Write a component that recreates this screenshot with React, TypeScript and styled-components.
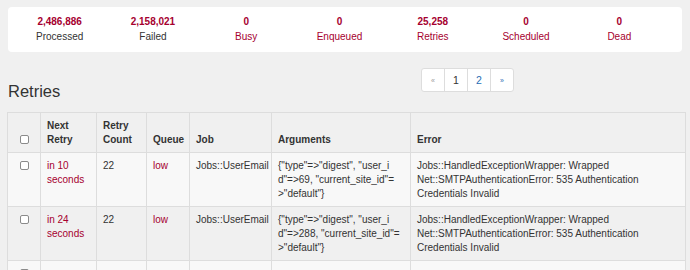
import { FC } from "react";
import styled, { createGlobalStyle } from "styled-components";

const GlobalStyle = createGlobalStyle`
    html, body {
        margin: 0;
        padding: 0;
        background-color: #f0f0f0;
        font-family: "Liberation Sans", Arial, sans-serif;
        color: #333;
    }
`;

const RED = "#a6002f";

// page
const Page = styled.div`
    padding: 7px 4px 0 7px;
    width: 690px;
    height: 270px;
    box-sizing: border-box;
    overflow: hidden;
`;

// stats bar
const StatsBar = styled.ul`
    list-style: none;
    margin: 0 4px 0 1px;
    padding: 8px 16px 6px 5px;
    height: 45px;
    box-sizing: border-box;
    display: grid;
    grid-template-columns: repeat(7, 1fr);
    background-color: #fff;
    border-radius: 4px;
`;

const Stat = styled.li`
    display: flex;
    flex-direction: column;
    align-items: center;
    gap: 1px;
`;

const StatCount = styled.span`
    font-size: 10px;
    line-height: 14px;
    font-weight: bold;
    color: ${RED};
`;

const StatLabel = styled.span<{ link: boolean }>`
    font-size: 10px;
    line-height: 14px;
    color: ${(props) => (props.link ? RED : "#333")};
`;

// heading + pager
const HeaderRow = styled.div`
    display: grid;
    grid-template-columns: 414px auto;
    align-items: start;
    margin-top: 16px;
`;

const Title = styled.h3`
    margin: 14px 0 0 1px;
    font-size: 16.5px;
    line-height: 18px;
    font-weight: normal;
    color: #333;
`;

const Pager = styled.ul`
    list-style: none;
    margin: 0;
    padding: 0;
    display: flex;
    width: max-content;
    background-color: #fff;
    border: 1px solid #ddd;
    border-radius: 3px;
`;

const PageItem = styled.li<{ tone: "muted" | "current" | "link"; small?: boolean }>`
    width: 22px;
    height: 22px;
    display: flex;
    align-items: center;
    justify-content: center;
    font-size: ${(props) => (props.small ? "7px" : "10.5px")};
    color: ${({ tone }) => (tone === "muted" ? "#999" : tone === "current" ? "#333" : "#2a6fb5")};
    & + & {
        border-left: 1px solid #ddd;
    }
`;

// table
const Table = styled.table`
    margin-top: 12px;
    width: 679px;
    table-layout: fixed;
    border-collapse: collapse;
    font-size: 10px;
    line-height: 14px;
`;

const Row = styled.tr<{ light?: boolean }>`
    background-color: ${(props) => (props.light ? "#f8f8f8" : "transparent")};
`;

const HeadCell = styled.th`
    border: 1px solid #ddd;
    padding: 6px 6px 5px;
    text-align: left;
    vertical-align: bottom;
    font-weight: bold;
    color: #333;
`;

const Cell = styled.td<{ red?: boolean; breakAll?: boolean }>`
    border: 1px solid #ddd;
    padding: 6px 6px 5px;
    vertical-align: top;
    color: ${(props) => (props.red ? RED : "#333")};
    word-break: ${(props) => (props.breakAll ? "break-all" : "normal")};
`;

const CheckCell = styled.td`
    border: 1px solid #ddd;
    padding: 6px 0 5px;
    vertical-align: top;
    text-align: center;
`;

const CheckHead = styled(HeadCell)`
    text-align: center;
    padding-left: 0;
    padding-right: 0;
`;

const Check = styled.input.attrs({ type: "checkbox" })`
    appearance: none;
    display: inline-block;
    width: 9px;
    height: 9px;
    margin: 2px 0 0;
    border: 1px solid #8a8a8a;
    border-radius: 2px;
    background-color: #fff;
    box-sizing: border-box;
    vertical-align: top;
`;

const stats = [
    { count: "2,486,886", label: "Processed", link: false },
    { count: "2,158,021", label: "Failed", link: false },
    { count: "0", label: "Busy", link: true },
    { count: "0", label: "Enqueued", link: true },
    { count: "25,258", label: "Retries", link: true },
    { count: "0", label: "Scheduled", link: true },
    { count: "0", label: "Dead", link: true },
];

const retries = [
    { next: "in 10 seconds", count: 22, queue: "low", job: "Jobs::UserEmail", userId: 69 },
    { next: "in 24 seconds", count: 22, queue: "low", job: "Jobs::UserEmail", userId: 288 },
];

const ERROR = "Jobs::HandledExceptionWrapper: Wrapped Net::SMTPAuthenticationError: 535 Authentication Credentials Invalid";

const App: FC = () => {
    return (
        <>
            <GlobalStyle />
            <Page>
                <StatsBar>
                    {stats.map((s) => (
                        <Stat key={s.label}>
                            <StatCount>{s.count}</StatCount>
                            <StatLabel link={s.link}>{s.label}</StatLabel>
                        </Stat>
                    ))}
                </StatsBar>

                <HeaderRow>
                    <Title>Retries</Title>
                    <Pager>
                        <PageItem tone="muted" small>«</PageItem>
                        <PageItem tone="current">1</PageItem>
                        <PageItem tone="link">2</PageItem>
                        <PageItem tone="link" small>»</PageItem>
                    </Pager>
                </HeaderRow>

                <Table>
                    <colgroup>
                        <col style={{ width: 33 }} />
                        <col style={{ width: 56 }} />
                        <col style={{ width: 50 }} />
                        <col style={{ width: 43 }} />
                        <col style={{ width: 82 }} />
                        <col style={{ width: 139 }} />
                        <col />
                    </colgroup>
                    <thead>
                        <Row>
                            <CheckHead><Check /></CheckHead>
                            <HeadCell>Next Retry</HeadCell>
                            <HeadCell>Retry Count</HeadCell>
                            <HeadCell>Queue</HeadCell>
                            <HeadCell>Job</HeadCell>
                            <HeadCell>Arguments</HeadCell>
                            <HeadCell>Error</HeadCell>
                        </Row>
                    </thead>
                    <tbody>
                        {retries.map((r, i) => (
                            <Row key={i} light={i % 2 === 0}>
                                <CheckCell><Check /></CheckCell>
                                <Cell red>{r.next}</Cell>
                                <Cell>{r.count}</Cell>
                                <Cell red>{r.queue}</Cell>
                                <Cell>{r.job}</Cell>
                                <Cell breakAll>{`{"type"=>"digest", "user_id"=>${r.userId}, "current_site_id"=>"default"}`}</Cell>
                                <Cell>{ERROR}</Cell>
                            </Row>
                        ))}
                        <Row light>
                            <CheckCell><Check /></CheckCell>
                            <Cell />
                            <Cell />
                            <Cell />
                            <Cell />
                            <Cell />
                            <Cell />
                        </Row>
                    </tbody>
                </Table>
            </Page>
        </>
    );
};

export default App;
